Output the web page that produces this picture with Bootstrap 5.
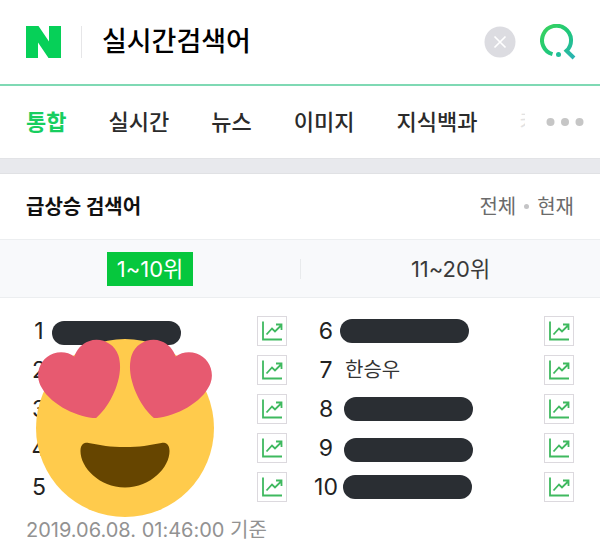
<!DOCTYPE html>
<html lang="ko">
<head>
<meta charset="utf-8">
<meta name="viewport" content="width=device-width, initial-scale=1">
<title>실시간검색어</title>
<link href="https://cdn.jsdelivr.net/npm/bootstrap@5.3.0/dist/css/bootstrap.min.css" rel="stylesheet">
<style>
  body { font-family: Inter, "Noto Sans CJK KR", sans-serif; font-size: 20px; line-height: 28px; color: #222; background: #fff; }
  a { text-decoration: none; }
  .search-bar { height: 86px; padding: 0 24px 0 26px; border-bottom: 2px solid #7fd9b4; }
  .search-split { width: 1px; height: 32px; background: #e6e6e8; margin: 0 20px; }
  .search-field { font-size: 27px; line-height: 36px; font-weight: 500; color: #000; border: 0; outline: 0; background: none; padding: 0; min-width: 0; }
  .clear-btn { width: 32px; height: 32px; margin-right: 24px; }
  .tab-strip { height: 72px; padding: 0 16px 0 26px; }
  .tab-strip a { font-size: 22px; font-weight: 500; color: #2b2b2b; margin-right: 42px; white-space: nowrap; }
  .tab-strip a.on { color: #17ce5f; font-weight: 700; }
  .tab-strip a.cut { width: 6px; margin: 0; overflow: hidden; color: #e2e2e2; font-size: 20px; font-weight: 400; }
  .band { height: 16px; background: #e8e9ed; border-top: 1px solid #e2e3e6; border-bottom: 1px solid #e0e1e4; }
  .head-row { height: 65px; padding: 0 26px; }
  .head-row h1 { font-size: 20px; line-height: 28px; font-weight: 700; color: #111; }
  .head-row a { color: #6b6b6b; }
  .tiny-dot { width: 5px; height: 5px; background: #c4c4c6; margin: 0 8px; }
  .range-row { height: 59px; background: #f8f9fb; border-top: 1px solid #eceef0; border-bottom: 1px solid #eceef0; }
  .range-row button { border: 0; background: none; color: #3a3a3a; height: 34px; padding: 0 10px; font-size: 22px; line-height: 34px; }
  .range-row button.on { background: #06c73d; color: #fff; }
  .range-row .half + .half::before { content: ""; width: 1px; height: 20px; background: #e8eaec; margin-right: auto; }
  .range-row .half + .half::after { content: ""; margin-left: auto; }
  .ranks { padding-top: 13px; }
  .ranks ol { list-style: none; padding: 0; margin: 0; }
  .ranks li { height: 39px; padding-right: 13px; }
  .ranks .col-6:last-child li { padding-right: 26px; }
  .rank-no { width: 26px; margin-left: 26px; text-align: center; font-size: 23px; }
  .ranks .col-6:last-child .rank-no { margin-left: 13px; }
  .word { color: #333; margin-left: 6px; }
  .masked { width: 129px; height: 24px; background: #2a2e33; }
  .gap-s { margin-left: 1px; } .gap-m { margin-left: 4px; } .gap-l { margin-left: 5px; }
  .low { margin-top: 4px; }
  .trend { width: 30px; height: 30px; border: 1px solid #dcd9de; background: #fff; padding: 0; }
  .stamp { padding: 10px 26px; color: #929292; }
  .face { position: absolute; left: 36px; top: 41px; width: 178px; height: 178px; }
</style>
<script src="https://cdn.jsdelivr.net/npm/bootstrap@5.3.0/dist/js/bootstrap.bundle.min.js"></script>
</head>
<body>
<svg class="d-none" aria-hidden="true">
  <symbol id="chart" viewBox="0 0 28 28"><g fill="none" stroke="#3fb95f" stroke-width="1.8"><path d="M5 4.500v18H24"/><path d="M8.500 17.500l5.500-6 3 3 6.500-6.500M18 7.500H23.500V13"/></g></symbol>
</svg>
<header class="search-bar d-flex align-items-center">
  <a href="#" aria-label="NAVER" class="d-flex"><svg width="35" height="32" viewBox="0 0 35 32"><path fill="#06d058" d="M0 0h12.500L23 15.500V0h12v32H22.500L12 16.500V32H0z"/></svg></a>
  <span class="search-split"></span>
  <input class="search-field flex-grow-1" type="text" value="실시간검색어" aria-label="검색어">
  <button class="clear-btn btn p-0 border-0 d-flex" type="button" aria-label="지우기"><svg width="32" height="32" viewBox="0 0 32 32"><circle cx="16" cy="16" r="15.500" fill="#dcdce1"/><path d="M10.500 10.500l11 11m0-11l-11 11" stroke="#fff" stroke-width="1.700"/></svg></button>
  <button class="btn p-0 border-0 d-flex" type="button" aria-label="검색"><svg width="36" height="36" viewBox="0 0 36 36"><defs><linearGradient id="q" x1="0" y1="0" x2="1" y2="1"><stop offset="0" stop-color="#3bd35c"/><stop offset=".5" stop-color="#1fc87a"/><stop offset="1" stop-color="#2bb3b4"/></linearGradient></defs><path d="M12.500 30.200A14.500 14.500 0 1 1 26.500 26.800L34 34" fill="none" stroke="url(#q)" stroke-width="4"/><circle cx="18.500" cy="30.500" r="2.500" fill="#20bf9a"/></svg></button>
</header>
<nav class="tab-strip d-flex align-items-center">
  <a href="#" class="on">통합</a><a href="#">실시간</a><a href="#">뉴스</a><a href="#">이미지</a><a href="#">지식백과</a><a href="#" class="cut">카페</a>
  <button class="btn p-0 border-0 d-flex ms-auto" type="button" aria-label="더보기"><svg width="38" height="10" viewBox="0 0 38 10" fill="#c6c6c6"><circle cx="4.500" cy="5" r="4"/><circle cx="19" cy="5" r="4"/><circle cx="33.500" cy="5" r="4"/></svg></button>
</nav>
<div class="band"></div>
<main>
  <div class="head-row d-flex align-items-center">
    <h1 class="m-0 me-auto">급상승 검색어</h1>
    <a href="#">전체</a><span class="tiny-dot rounded-circle"></span><a href="#">현재</a>
  </div>
  <div class="range-row d-flex">
    <div class="half w-50 d-flex align-items-center justify-content-center"><button type="button" class="on">1~10위</button></div>
    <div class="half w-50 d-flex align-items-center justify-content-center"><button type="button">11~20위</button></div>
  </div>
  <section class="ranks position-relative">
    <div class="row g-0">
      <div class="col-6"><ol>
        <li class="d-flex align-items-center"><span class="rank-no">1</span><span class="masked low rounded-pill"></span><button class="trend ms-auto d-flex" type="button" aria-label="1위 추이"><svg width="28" height="28"><use href="#chart"/></svg></button></li>
        <li class="d-flex align-items-center"><span class="rank-no">2</span><button class="trend ms-auto d-flex" type="button" aria-label="2위 추이"><svg width="28" height="28"><use href="#chart"/></svg></button></li>
        <li class="d-flex align-items-center"><span class="rank-no">3</span><button class="trend ms-auto d-flex" type="button" aria-label="3위 추이"><svg width="28" height="28"><use href="#chart"/></svg></button></li>
        <li class="d-flex align-items-center"><span class="rank-no">4</span><button class="trend ms-auto d-flex" type="button" aria-label="4위 추이"><svg width="28" height="28"><use href="#chart"/></svg></button></li>
        <li class="d-flex align-items-center"><span class="rank-no">5</span><button class="trend ms-auto d-flex" type="button" aria-label="5위 추이"><svg width="28" height="28"><use href="#chart"/></svg></button></li>
      </ol></div>
      <div class="col-6"><ol>
        <li class="d-flex align-items-center"><span class="rank-no">6</span><span class="masked gap-s rounded-pill"></span><button class="trend ms-auto d-flex" type="button" aria-label="6위 추이"><svg width="28" height="28"><use href="#chart"/></svg></button></li>
        <li class="d-flex align-items-center"><span class="rank-no">7</span><a href="#" class="word">한승우</a><button class="trend ms-auto d-flex" type="button" aria-label="7위 추이"><svg width="28" height="28"><use href="#chart"/></svg></button></li>
        <li class="d-flex align-items-center"><span class="rank-no">8</span><span class="masked gap-l rounded-pill"></span><button class="trend ms-auto d-flex" type="button" aria-label="8위 추이"><svg width="28" height="28"><use href="#chart"/></svg></button></li>
        <li class="d-flex align-items-center"><span class="rank-no">9</span><span class="masked gap-l low rounded-pill"></span><button class="trend ms-auto d-flex" type="button" aria-label="9위 추이"><svg width="28" height="28"><use href="#chart"/></svg></button></li>
        <li class="d-flex align-items-center"><span class="rank-no">10</span><span class="masked gap-m rounded-pill"></span><button class="trend ms-auto d-flex" type="button" aria-label="10위 추이"><svg width="28" height="28"><use href="#chart"/></svg></button></li>
      </ol></div>
    </div>
    <svg class="face" viewBox="0 0 36 36" aria-hidden="true"><circle cx="18" cy="18" r="18" fill="#ffcb4c"/><path fill="#e75a70" d="M16.65 3.281C15.791.85 13.126-.426 10.694.431c-1.476.52-2.521 1.711-2.928 3.104-1.191-.829-2.751-1.1-4.225-.58C1.111 3.813-.167 6.48.692 8.911c.122.344.284.663.472.958 1.951 3.582 7.588 6.1 11.001 6.131 2.637-2.167 5.446-7.665 4.718-11.677-.038-.348-.113-.698-.233-1.042zm2.7 0C20.209.85 22.875-.426 25.306.431c1.476.52 2.521 1.711 2.929 3.104 1.191-.829 2.751-1.1 4.225-.58 2.43.858 3.707 3.525 2.85 5.956-.123.344-.284.663-.473.958-1.951 3.582-7.588 6.1-11.002 6.131-2.637-2.167-5.445-7.665-4.717-11.677.037-.348.112-.698.232-1.042z"/><path fill="#664500" d="M18 21.849c-2.966 0-4.935-.346-7.369-.819-.557-.106-1.638 0-1.638 1.638 0 3.275 3.763 7.369 9.007 7.369s9.007-4.094 9.007-7.369c0-1.638-1.082-1.745-1.638-1.638-2.434.473-4.402.819-7.369.819"/></svg>
    <p class="stamp m-0">2019.06.08. 01:46:00 기준</p>
  </section>
</main>
</body>
</html>
